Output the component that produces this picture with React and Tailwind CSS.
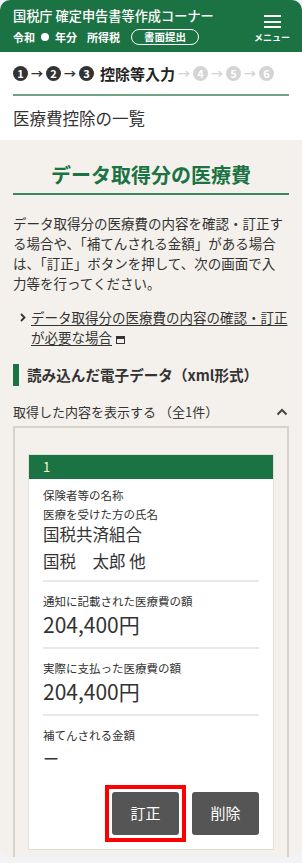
import React from 'react';

const GREEN = 'bg-[#1b7343]';

const StepCircle = ({ n, active }) => (
  <span
    className={`flex h-[15px] w-[15px] items-center justify-center rounded-full text-[11px] font-bold leading-none text-white ${active ? 'bg-[#333]' : 'bg-[#d4d4d4]'}`}
  >
    {n}
  </span>
);

const Arrow = ({ active }) => (
  <span className={`mx-[3px] text-[12px] font-bold leading-none ${active ? 'text-[#333]' : 'text-[#d4d4d4]'}`}>→</span>
);

const Divider = () => <div className="my-[10px] h-[2px] bg-[#e8e8e8]" />;

const App = () => {
  return (
    <div className="h-[863px] w-[302px] bg-[#f2f3f7]" style={{ fontFamily: '"Noto Sans CJK JP", "Noto Sans", sans-serif' }}>
      <div className="h-[857px] overflow-hidden rounded-[10px] bg-[#f4f1ec]">
        {/* header */}
        <header className={`${GREEN} flex h-[52px] justify-between pl-[13px] pr-[11px] text-white`}>
          <div className="pt-[6px]">
            <p className="text-[13.2px] font-medium leading-[20px]">国税庁 確定申告書等作成コーナー</p>
            <div className="mt-[3px] flex items-center text-[11px] font-bold leading-none">
              <span>令和</span>
              <span className="mx-[6px] inline-block h-[8px] w-[8px] rounded-full bg-white" />
              <span>年分</span>
              <span className="ml-[10px]">所得税</span>
              <span className="ml-[11px] flex h-[16px] w-[68px] items-center justify-center rounded-full border border-white text-[10.5px]">
                書面提出
              </span>
            </div>
          </div>
          <div className="flex w-[38px] flex-col items-center pt-[15px]">
            <div className="flex w-[17px] flex-col gap-[3.5px]">
              <span className="h-[2px] bg-white" />
              <span className="h-[2px] bg-white" />
              <span className="h-[2px] bg-white" />
            </div>
            <span className="mt-[5px] text-[9px] font-bold leading-none">メニュー</span>
          </div>
        </header>

        {/* steps */}
        <div className="bg-white px-[13px]">
          <div className="flex h-[42px] items-center pt-[1px]">
            <StepCircle n="1" active />
            <Arrow active />
            <StepCircle n="2" active />
            <Arrow active />
            <StepCircle n="3" active />
            <span className="ml-[6px] text-[15px] font-bold leading-none text-[#222]">控除等入力</span>
            <Arrow />
            <StepCircle n="4" />
            <Arrow />
            <StepCircle n="5" />
            <Arrow />
            <StepCircle n="6" />
          </div>
          <div className="h-[2px] bg-[#6fa586]" />
          <h1 className="py-[10px] text-[16.5px] leading-[24px] text-[#333]">医療費控除の一覧</h1>
        </div>

        {/* main */}
        <div className="px-[13px] pt-[22px] text-[#333]">
          <h2 className="border-b-2 border-[#3c8a5c] pb-[5px] text-center text-[20px] font-bold leading-[26px] text-[#1b7343]">
            データ取得分の医療費
          </h2>
          <p className="mt-[18px] w-[272px] text-[13.5px] leading-[20px]">
            データ取得分の医療費の内容を確認・訂正する場合や、「補てんされる金額」がある場合は、「訂正」ボタンを押して、次の画面で入力等を行ってください。
          </p>
          <div className="mt-[14px] flex pl-[7px]">
            <svg width="6" height="20" viewBox="0 0 6 20" className="mr-[5px] shrink-0">
              <path d="M1 7 L4.5 10.5 L1 14" fill="none" stroke="#333" strokeWidth="1.8" />
            </svg>
            <a className="w-[258px] text-[13.5px] leading-[20px] underline underline-offset-2">
              データ取得分の医療費の内容の確認・訂正が必要な場合
              <span className="ml-[4px] inline-block h-[8px] w-[9px] border border-[#333] border-t-[3px] align-[-1px] no-underline" />
            </a>
          </div>

          <h3 className="mt-[17px] flex items-center border-l-[6px] border-[#1b7343] pl-[8px] text-[14.6px] font-bold leading-[22px]">
            読み込んだ電子データ（xml形式）
          </h3>

          <div className="mt-[16px] flex items-center justify-between">
            <span className="text-[13px] leading-[20px]">取得した内容を表示する （全1件）</span>
            <svg width="12" height="8" viewBox="0 0 12 8" className="mr-[1px]">
              <path d="M1.5 6.5 L6 2 L10.5 6.5" fill="none" stroke="#444" strokeWidth="2" />
            </svg>
          </div>

          <div className="mt-[4px] border-2 border-b-0 border-[#d8d3ca] px-[13px] pt-[26px] pb-[20px]">
            <div className="border border-[#e3ded6] bg-white">
              <div className={`${GREEN} flex h-[24px] items-center px-[14px] text-[13px] text-[#fff8d0]`}>1</div>
              <div className="px-[14px] pt-[7px] pb-[7px]">
                <p className="text-[11.5px] leading-[19px]">保険者等の名称</p>
                <p className="text-[11.5px] leading-[19px]">医療を受けた方の氏名</p>
                <p className="text-[16.5px] leading-[20px]">国税共済組合</p>
                <p className="text-[16.5px] leading-[34px]">国税　太郎 他</p>
                <div className="mt-[2px] mb-[10px] h-[2px] bg-[#e8e8e8]" />
                <p className="text-[11.5px] leading-[19px]">通知に記載された医療費の額</p>
                <p className="text-[21px] leading-[26px]">204,400円</p>
                <Divider />
                <p className="text-[11.5px] leading-[19px]">実際に支払った医療費の額</p>
                <p className="text-[21px] leading-[26px]">204,400円</p>
                <Divider />
                <p className="text-[11.5px] leading-[19px]">補てんされる金額</p>
                <p className="mt-[1px] text-[16px] leading-[24px]">ー</p>
                <div className="mt-[15px] flex justify-end gap-[6px]">
                  <div className="border-[4px] border-[#ff0000] p-[3px]">
                    <button className="h-[43px] w-[67px] rounded-[3px] bg-[#555] text-[15px] text-white">訂正</button>
                  </div>
                  <div className="py-[7px]">
                    <button className="h-[43px] w-[67px] rounded-[3px] bg-[#555] text-[15px] text-white">削除</button>
                  </div>
                </div>
              </div>
            </div>
          </div>
        </div>
      </div>
    </div>
  );
};

export default App;
